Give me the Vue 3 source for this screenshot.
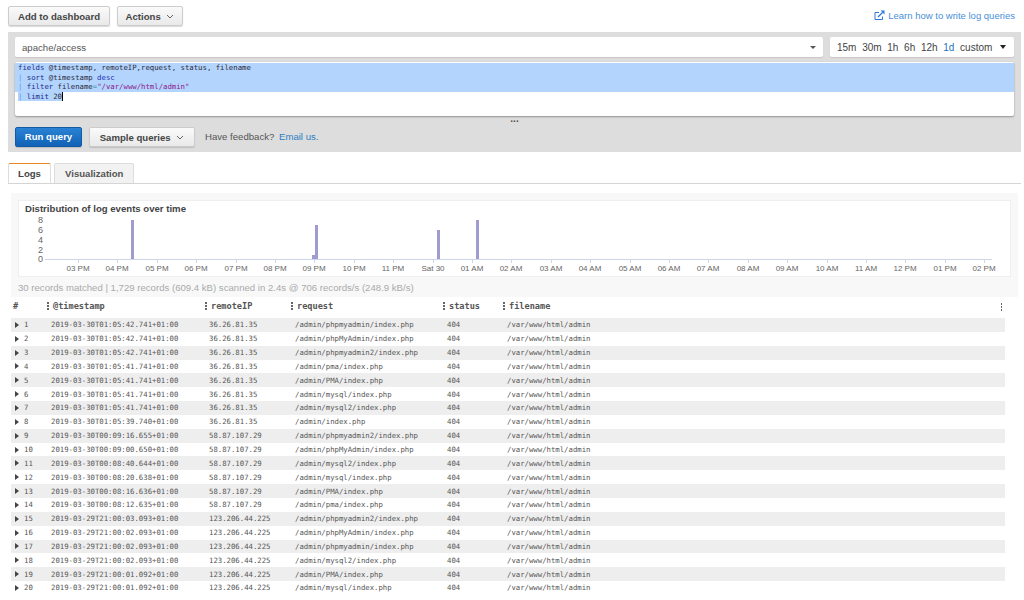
<template>
  <div class="page">
    <div class="topbar">
      <div class="top-btns">
        <button class="btn add">Add to dashboard</button>
        <button class="btn actions">Actions <svg class="chev" width="8" height="5" viewBox="0 0 8 5"><path d="M1 1l3 3 3-3" fill="none" stroke="#666" stroke-width="1"/></svg></button>
      </div>
      <a class="learn">
        <svg width="11" height="11" viewBox="0 0 11 11"><path d="M8.500 6.500v3h-7.500v-7h4" fill="none" stroke="#2b7ad6" stroke-width="1"/><path d="M4 7l4.500-4.500" fill="none" stroke="#2b7ad6" stroke-width="1.300"/><path d="M6.500 0.500h4v4z" fill="#2b7ad6"/></svg>
        Learn how to write log queries
      </a>
    </div>

    <div class="query-panel">
      <div class="selects">
        <div class="log-select">
          <span>apache/access</span>
          <span class="caret small"></span>
        </div>
        <div class="range">
          <span v-for="r in ranges" :key="r" :class="{ active: r === '1d' }">{{ r }}</span>
          <span class="caret"></span>
        </div>
      </div>
      <div class="editor">
        <div class="line sel-full"><span class="kw">fields</span> @timestamp, remoteIP,request, status, filename</div>
        <div class="line sel-full"><span class="pipe">|</span> <span class="kw">sort</span> @timestamp <span class="kw2">desc</span></div>
        <div class="line sel-full"><span class="pipe">|</span> <span class="kw">filter</span> filename<span class="op">=</span><span class="str">"/var/www/html/admin"</span></div>
        <div class="line"><span class="sel-text"><span class="pipe">|</span> <span class="kw">limit</span> 20</span><span class="cursor"></span></div>
      </div>
      <div class="dots">...</div>
      <div class="run-row">
        <button class="btn primary">Run query</button>
        <button class="btn sample">Sample queries <svg class="chev" width="8" height="5" viewBox="0 0 8 5"><path d="M1 1l3 3 3-3" fill="none" stroke="#666" stroke-width="1"/></svg></button>
        <span class="feedback">Have feedback? <a>Email us.</a></span>
      </div>
    </div>

    <div class="tabs">
      <div class="tab active">Logs</div>
      <div class="tab">Visualization</div>
    </div>

    <div class="results">
      <div class="chart">
        <div class="chart-title">Distribution of log events over time</div>
        <svg class="plot" width="993" height="62" viewBox="18 216 993 62">
          <g class="ylab">
            <text v-for="y in yLabels" :key="y.t" x="43" :y="y.y" text-anchor="end">{{ y.t }}</text>
          </g>
          <path d="M45 259.500H992" stroke="#ccd6eb" stroke-width="1"/>
          <path v-for="t in xTicks" :key="t.x" :d="`M${t.x + 0.5} 260v3`" stroke="#ccd6eb" stroke-width="1"/>
          <rect v-for="b in bars" :key="b.x" :x="b.x" :y="b.y" width="3" :height="259 - b.y" fill="#a19ccf"/>
          <g class="xlab">
            <text v-for="t in xTicks" :key="t.x" :x="t.x" y="271" text-anchor="middle">{{ t.t }}</text>
          </g>
        </svg>
      </div>
      <div class="stats">30 records matched | 1,729 records (609.4 kB) scanned in 2.4s @ 706 records/s (248.9 kB/s)</div>
    </div>

    <div class="table">
      <div class="thead">
        <span class="c-num">#</span>
        <span class="c-time"><i class="grip"></i>@timestamp</span>
        <span class="c-ip"><i class="grip"></i>remoteIP</span>
        <span class="c-req"><i class="grip"></i>request</span>
        <span class="c-status"><i class="grip"></i>status</span>
        <span class="c-file"><i class="grip"></i>filename</span>
        <i class="grip last"></i>
      </div>
      <div v-for="(r, i) in rows" :key="i" class="row">
        <span class="c-num"><span class="arrow"></span>{{ i + 1 }}</span>
        <span class="c-time">{{ r[0] }}</span>
        <span class="c-ip">{{ r[1] }}</span>
        <span class="c-req">/admin/{{ r[2] }}index.php</span>
        <span class="c-status">404</span>
        <span class="c-file">/var/www/html/admin</span>
      </div>
    </div>
  </div>
</template>

<script setup>
const ranges = ['15m', '30m', '1h', '6h', '12h', '1d', 'custom'];

const yLabels = [
  { t: '8', y: 223 },
  { t: '6', y: 233 },
  { t: '4', y: 243 },
  { t: '2', y: 253 },
  { t: '0', y: 262 },
];

const bars = [
  { x: 131, y: 220 },
  { x: 312, y: 255 },
  { x: 315, y: 225 },
  { x: 437, y: 230 },
  { x: 476, y: 220 },
];

const tickNames = ['03 PM', '04 PM', '05 PM', '06 PM', '07 PM', '08 PM', '09 PM', '10 PM', '11 PM', 'Sat 30', '01 AM', '02 AM', '03 AM', '04 AM', '05 AM', '06 AM', '07 AM', '08 AM', '09 AM', '10 AM', '11 AM', '12 PM', '01 PM', '02 PM'];
const xTicks = tickNames.map((t, i) => ({ t, x: Math.round(78 + i * 39.4) }));

const d30 = '2019-03-30T';
const d29 = '2019-03-29T21:00:0';
const a = '36.26.81.35';
const b = '58.87.107.29';
const c = '123.206.44.225';
const rows = [
  [d30 + '01:05:42.741+01:00', a, 'phpmyadmin/'],
  [d30 + '01:05:42.741+01:00', a, 'phpMyAdmin/'],
  [d30 + '01:05:42.741+01:00', a, 'phpmyadmin2/'],
  [d30 + '01:05:41.741+01:00', a, 'pma/'],
  [d30 + '01:05:41.741+01:00', a, 'PMA/'],
  [d30 + '01:05:41.741+01:00', a, 'mysql/'],
  [d30 + '01:05:41.741+01:00', a, 'mysql2/'],
  [d30 + '01:05:39.740+01:00', a, ''],
  [d30 + '00:09:16.655+01:00', b, 'phpmyadmin2/'],
  [d30 + '00:09:00.650+01:00', b, 'phpMyAdmin/'],
  [d30 + '00:08:40.644+01:00', b, 'mysql2/'],
  [d30 + '00:08:20.638+01:00', b, 'mysql/'],
  [d30 + '00:08:16.636+01:00', b, 'PMA/'],
  [d30 + '00:08:12.635+01:00', b, 'pma/'],
  [d29 + '3.093+01:00', c, 'phpmyadmin2/'],
  [d29 + '2.093+01:00', c, 'phpMyAdmin/'],
  [d29 + '2.093+01:00', c, 'phpmyadmin/'],
  [d29 + '2.093+01:00', c, 'mysql2/'],
  [d29 + '1.092+01:00', c, 'PMA/'],
  [d29 + '1.092+01:00', c, 'mysql/'],
];
</script>

<style>
html, body {
  background: #fff;
  overflow: hidden;
}
</style>

<style scoped>
.page {
  width: 1024px;
  height: 600px;
  overflow: hidden;
  box-sizing: border-box;
  font-family: "Liberation Sans", Arial, sans-serif;
  font-size: 9.600px;
  color: #444;
  background: #fff;
}

.topbar {
  display: flex;
  justify-content: space-between;
  align-items: center;
  height: 32px;
  padding: 0 9px 0 8px;
}

.top-btns {
  display: flex;
  gap: 7px;
}

.btn {
  box-sizing: border-box;
  height: 20px;
  padding: 0;
  font-family: inherit;
  font-size: 9.600px;
  font-weight: bold;
  color: #444;
  background: linear-gradient(#fafafa, #e9e9e9);
  border: 1px solid #ccc;
  border-radius: 2px;
  box-shadow: 0 1px 1px rgba(0, 0, 0, 0.15);
  white-space: nowrap;
}

.btn.add {
  width: 102px;
}

.btn.actions {
  width: 66px;
}

.chev {
  margin-left: 3px;
  vertical-align: 1px;
}

.learn {
  display: flex;
  align-items: center;
  gap: 3px;
  margin-top: -2px;
  font-size: 9.500px;
  color: #4a90d9;
}

.query-panel {
  box-sizing: border-box;
  width: 1013px;
  height: 120px;
  margin-left: 8px;
  padding: 5px 7px 0;
  background: #ddd;
}

.selects {
  display: flex;
  gap: 7px;
}

.log-select,
.range {
  box-sizing: border-box;
  height: 20px;
  display: flex;
  align-items: center;
  background: #fff;
  border-radius: 2px;
  box-shadow: 0 1px 1px rgba(0, 0, 0, 0.1);
}

.log-select {
  width: 808px;
  justify-content: space-between;
  padding: 0 7px;
  color: #555;
}

.range {
  width: 184px;
  gap: 5.700px;
  padding: 0 8px 0 7px;
  font-size: 10px;
  color: #444;
}

.range .active {
  color: #1f6fbf;
}

.caret {
  margin-left: auto;
  width: 0;
  height: 0;
  border-left: 3.500px solid transparent;
  border-right: 3.500px solid transparent;
  border-top: 4px solid #222;
}

.caret.small {
  border-left-width: 3px;
  border-right-width: 3px;
  border-top: 3px solid #555;
}

.editor {
  box-sizing: border-box;
  height: 54px;
  margin-top: 5px;
  padding-top: 1px;
  background: #fff;
  border-radius: 2px;
  box-shadow: 0 1px 2px rgba(0, 0, 0, 0.35);
  font-family: "DejaVu Sans Mono", monospace;
  font-size: 7.300px;
  color: #2a2a3a;
}

.line {
  height: 9.500px;
  line-height: 9.500px;
  white-space: pre;
  padding-left: 3px;
}

.sel-full {
  background: #b3d4fd;
}

.sel-text {
  display: inline-block;
  height: 9.500px;
  background: #b3d4fd;
  vertical-align: top;
}

.line .pipe {
  color: #5b9be0;
}

.line .kw {
  color: #1a2a8a;
}

.line .kw2 {
  color: #2233bb;
}

.line .op {
  color: #2a8a9a;
}

.line .str {
  color: #8b1a8b;
}

.cursor {
  display: inline-block;
  width: 1px;
  height: 9.500px;
  background: #000;
  vertical-align: top;
}

.dots {
  height: 10px;
  line-height: 5px;
  text-align: center;
  font-size: 10px;
  font-weight: bold;
  color: #555;
}

.run-row {
  display: flex;
  align-items: center;
  gap: 7px;
}

.btn.primary {
  width: 67px;
  color: #fff;
  background: linear-gradient(#2b82d4, #0f62b5);
  border-color: #125ca6;
}

.btn.sample {
  width: 106px;
  margin-top: 1px;
}

.feedback {
  margin-left: 3px;
  color: #555;
}

.feedback a {
  margin-left: 2px;
  color: #2b7fc4;
}

.tabs {
  display: flex;
  gap: 3px;
  box-sizing: border-box;
  width: 1013px;
  height: 32px;
  margin-left: 8px;
  padding-top: 11px;
  border-bottom: 1px solid #d5d5d5;
}

.tab {
  box-sizing: border-box;
  height: 20px;
  line-height: 19px;
  padding: 0 10px;
  font-size: 9.600px;
  font-weight: bold;
  color: #555;
  background: #f2f2f2;
  border: 1px solid #ddd;
  border-bottom: none;
  border-radius: 2px 2px 0 0;
}

.tab.active {
  width: 43px;
  text-align: center;
  padding: 0;
  color: #444;
  background: #fff;
  border-top: 1px solid #e8851c;
}

.results {
  box-sizing: border-box;
  width: 1007px;
  height: 104px;
  margin: 9px 0 0 11px;
  padding: 7px 7px 0;
  background: #f8f8f8;
}

.chart {
  box-sizing: border-box;
  width: 993px;
  height: 77px;
  background: #fff;
  border: 1px solid #efefef;
}

.chart-title {
  height: 14px;
  line-height: 16px;
  padding-left: 6px;
  font-size: 9.600px;
  font-weight: bold;
  color: #444;
}

.plot {
  display: block;
  margin: 1px 0 0 -1px;
}

.ylab text,
.xlab text {
  font-family: "Liberation Sans", Arial, sans-serif;
  fill: #666;
}

.ylab text {
  font-size: 9px;
}

.xlab text {
  font-size: 8px;
}

.stats {
  height: 20px;
  line-height: 22px;
  font-size: 9.600px;
  color: #aaa;
  white-space: nowrap;
}

.table {
  width: 994px;
  margin-left: 11px;
  font-family: "DejaVu Sans Mono", monospace;
  font-size: 7.300px;
  color: #555;
}

.thead,
.row {
  display: flex;
  align-items: center;
  white-space: nowrap;
}

.thead {
  position: relative;
  box-sizing: border-box;
  height: 21px;
  padding-bottom: 3px;
  font-size: 8.600px;
  font-weight: bold;
  color: #555;
}

.row {
  height: 13.850px;
}

.row:nth-child(even) {
  background: #eee;
}

.c-num {
  width: 40px;
  padding-left: 4px;
  box-sizing: border-box;
}

.row .c-num {
  display: flex;
  align-items: center;
}

.c-time {
  width: 158px;
}

.c-ip {
  width: 86px;
}

.c-req {
  width: 152px;
}

.c-status {
  width: 60px;
}

.c-file {
  flex: 1;
}

.thead span {
  position: relative;
  box-sizing: border-box;
  padding-left: 2px;
}

.grip {
  position: absolute;
  left: -4px;
  top: 1px;
  width: 1.500px;
  height: 1.500px;
  background: #666;
  box-shadow: 0 3px 0 #666, 0 6px 0 #666;
}

.grip.last {
  left: auto;
  right: 3px;
  top: 6px;
}

.arrow {
  width: 0;
  height: 0;
  margin-right: 5px;
  border-top: 3px solid transparent;
  border-bottom: 3px solid transparent;
  border-left: 4px solid #444;
}
</style>
